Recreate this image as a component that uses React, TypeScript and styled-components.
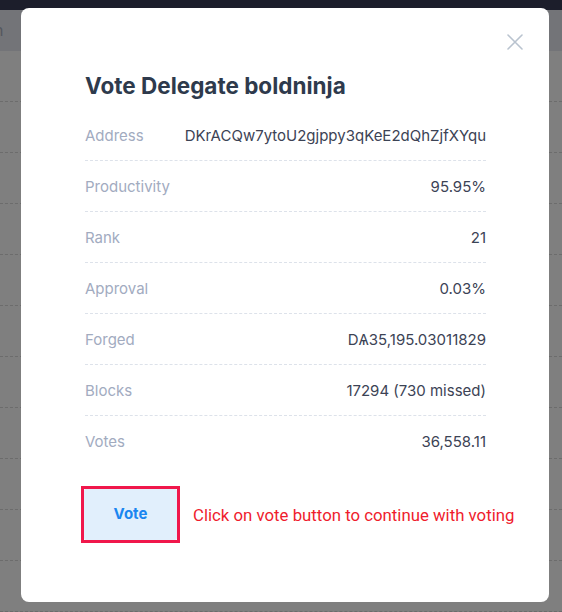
import React from "react";
import styled, { createGlobalStyle } from "styled-components";

const Global = createGlobalStyle`
  html, body { margin: 0; padding: 0; }
  body { background: #7f7f7f; font-family: "Inter", "Liberation Sans", sans-serif; overflow: hidden; }
`;

const Page = styled.div`
  width: 562px;
  height: 612px;
  display: flex;
  flex-direction: column;
  background: #7f7f7f;
`;

const TopBar = styled.div`
  height: 12px;
  background: #1c1e2b;
`;

const PageHeader = styled.div`
  height: 51px;
  background: #737478;
  display: flex;
  align-items: center;
  color: #55585f;
  font-size: 16px;
  overflow: hidden;
`;

const HeaderText = styled.span`
  margin-left: -6px;
`;

const BgRow = styled.div`
  height: 51px;
  flex-shrink: 0;
  border-bottom: 1px dashed #6c6c6c;
  box-sizing: border-box;
`;

const Modal = styled.div`
  position: fixed;
  left: 21px;
  top: 8px;
  width: 528px;
  height: 594px;
  background: #ffffff;
  border-radius: 8px;
  box-sizing: border-box;
  padding: 64px 63px 0 64px;
  display: flex;
  flex-direction: column;
`;

const Close = styled.button`
  position: absolute;
  top: 22px;
  right: 22px;
  width: 24px;
  height: 24px;
  padding: 0;
  border: none;
  background: none;
  display: flex;
  align-items: center;
  justify-content: center;
`;

const Title = styled.h2`
  margin: 0 0 10px;
  font-size: 22.5px;
  line-height: 28px;
  font-weight: 700;
  color: #2e3a4c;
`;

const Table = styled.div`
  display: flex;
  flex-direction: column;
`;

const Row = styled.div<{ $last?: boolean }>`
  height: 51px;
  box-sizing: border-box;
  display: flex;
  align-items: center;
  justify-content: space-between;
  font-size: 15px;
  border-bottom: ${(p) => (p.$last ? "none" : "1px dashed #dde2ea")};
`;

const Label = styled.span`
  color: #a2abbf;
`;

const Value = styled.span`
  color: #3c4355;
`;

const Actions = styled.div`
  display: flex;
  align-items: center;
  margin-top: 19px;
  margin-left: -4px;
  gap: 13px;
`;

const Highlight = styled.div`
  border: 3px solid #f0174b;
  display: flex;
  flex-shrink: 0;
`;

const VoteButton = styled.button`
  width: 93px;
  height: 51px;
  padding: 0 0 3px;
  border: none;
  background: #e1effc;
  color: #1a86f0;
  font-family: "Inter", "Liberation Sans", sans-serif;
  font-weight: 700;
  font-size: 15px;
  border-radius: 2px;
`;

const Hint = styled.span`
  font-family: "Roboto", "Liberation Sans", sans-serif;
  font-size: 16.8px;
  color: #ef1c2d;
  white-space: nowrap;
`;

const rows: [string, string][] = [
  ["Address", "DKrACQw7ytoU2gjppy3qKeE2dQhZjfXYqu"],
  ["Productivity", "95.95%"],
  ["Rank", "21"],
  ["Approval", "0.03%"],
  ["Forged", "DѦ35,195.03011829"],
  ["Blocks", "17294 (730 missed)"],
  ["Votes", "36,558.11"],
];

export default function App() {
  return (
    <>
      <Global />
      <Page>
        <TopBar />
        <PageHeader>
          <HeaderText>n</HeaderText>
        </PageHeader>
        {Array.from({ length: 11 }).map((_, i) => (
          <BgRow key={i} />
        ))}
      </Page>
      <Modal>
        <Close aria-label="Close">
          <svg width="16" height="16" viewBox="0 0 16 16">
            <path d="M1 1 L15 15 M15 1 L1 15" stroke="#b9c3cf" strokeWidth="1.6" strokeLinecap="round" />
          </svg>
        </Close>
        <Title>Vote Delegate boldninja</Title>
        <Table>
          {rows.map(([k, v], i) => (
            <Row key={k} $last={i === rows.length - 1}>
              <Label>{k}</Label>
              <Value>{v}</Value>
            </Row>
          ))}
        </Table>
        <Actions>
          <Highlight>
            <VoteButton>Vote</VoteButton>
          </Highlight>
          <Hint>Click on vote button to continue with voting</Hint>
        </Actions>
      </Modal>
    </>
  );
}
